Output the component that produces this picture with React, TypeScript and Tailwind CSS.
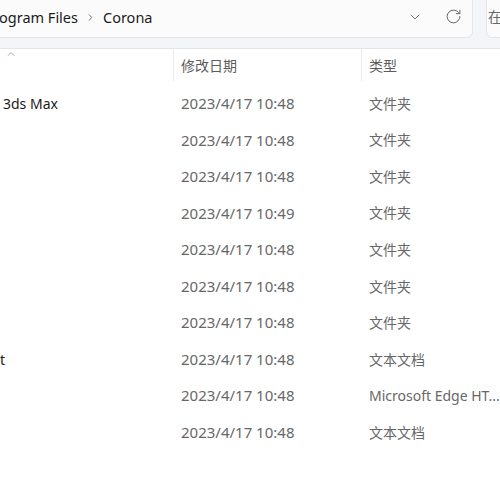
import { ChevronDown, RotateCw, ChevronRight, ChevronUp } from "lucide-react";

const rows = [
  { name: "3ds Max", pad: "pl-[3px]", date: "2023/4/17 10:48", type: "文件夹" },
  { name: "", pad: "", date: "2023/4/17 10:48", type: "文件夹" },
  { name: "", pad: "", date: "2023/4/17 10:48", type: "文件夹" },
  { name: "", pad: "", date: "2023/4/17 10:49", type: "文件夹" },
  { name: "", pad: "", date: "2023/4/17 10:48", type: "文件夹" },
  { name: "", pad: "", date: "2023/4/17 10:48", type: "文件夹" },
  { name: "", pad: "", date: "2023/4/17 10:48", type: "文件夹" },
  { name: "t", pad: "pl-0", date: "2023/4/17 10:48", type: "文本文档" },
  { name: "", pad: "", date: "2023/4/17 10:48", type: "Microsoft Edge HT..." },
  { name: "", pad: "", date: "2023/4/17 10:48", type: "文本文档" },
];

export default function App() {
  return (
    <div
      className="w-[500px] h-[500px] overflow-hidden bg-white text-[#1b1b1b]"
      style={{ fontFamily: '"Noto Sans", "Noto Sans CJK SC", sans-serif' }}
    >
      {/* address bar */}
      <div className="h-[49px] bg-[#f3f5f9] border-b border-[#e3e6ea] flex overflow-hidden">
        <div className="-mt-[8px] -ml-[8px] w-[481px] h-[46px] shrink-0 rounded-md bg-[#fbfbfc] border border-[#e4e6e9] flex items-end pb-[10px]">
          <div className="flex items-center pl-[6px] text-[14.5px] leading-[20px] text-[#1b1b1b] grow">
            <span>ogram Files</span>
            <ChevronRight className="w-[11px] h-[11px] mx-[7px] text-[#555]" strokeWidth={1.8} />
            <span>Corona</span>
          </div>
          <div className="flex items-center pr-[10px] pb-[2px]">
            <ChevronDown className="w-[16px] h-[16px] text-[#666]" strokeWidth={1.4} />
            <div className="w-[22px]" />
            <RotateCw className="w-[17px] h-[17px] text-[#666]" strokeWidth={1.4} />
          </div>
        </div>
        <div className="-mt-[8px] ml-[13px] w-[40px] h-[46px] shrink-0 rounded-md bg-[#fbfbfc] border border-[#e4e6e9] flex items-end pb-[10px] pl-[1px] text-[14px] text-[#666] overflow-hidden">
          在
        </div>
      </div>

      {/* column header */}
      <div className="h-[32px] flex relative text-[14px] text-[#5c5c5c]">
        <div className="w-[173px] relative">
          <ChevronUp className="absolute left-[5px] top-[-1px] w-[12px] h-[12px] text-[#888]" strokeWidth={1.4} />
        </div>
        <div className="w-[188px] border-l border-[#ebebeb] pl-[7px] flex items-center">修改日期</div>
        <div className="grow border-l border-[#ebebeb] pl-[7px] flex items-center">类型</div>
      </div>

      {/* rows */}
      <div className="pt-[4px]">
        {rows.map((r, i) => (
          <div key={i} className="h-[36.55px] flex items-center text-[14px]">
            <div className={`w-[174px] text-[#1b1b1b] ${r.pad}`}>{r.name}</div>
            <div className="w-[188px] pl-[7px] text-[15px] text-[#676767]">{r.date}</div>
            <div className="grow pl-[7px] text-[#676767] whitespace-nowrap">{r.type}</div>
          </div>
        ))}
      </div>
    </div>
  );
}
